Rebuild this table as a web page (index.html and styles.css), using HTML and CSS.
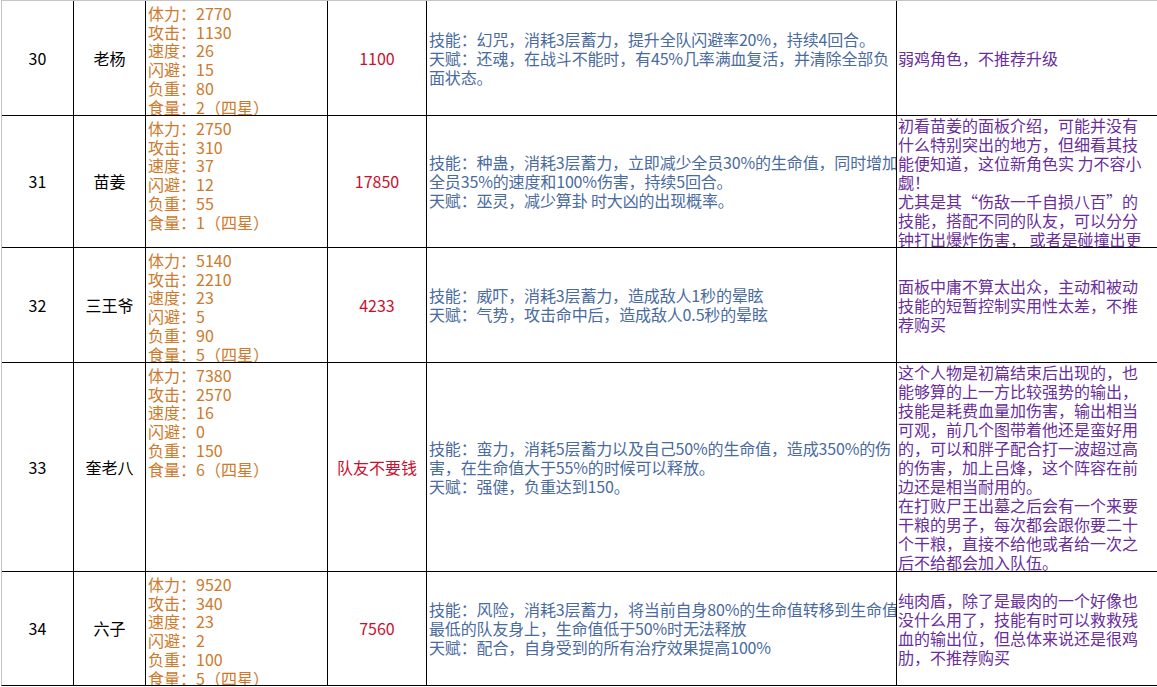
FILE: index.html
```html
<!DOCTYPE html>
<html lang="zh">
<head>
<meta charset="utf-8">
<title>角色表</title>
<link rel="stylesheet" href="styles.css">
</head>
<body>
<div class="sheet">
  <div class="row">
    <div class="cell num"><div class="txt">30</div></div>
    <div class="cell name"><div class="txt">老杨</div></div>
    <div class="cell stats"><div class="txt">体力：2770<br>攻击：1130<br>速度：26<br>闪避：15<br>负重：80<br>食量：2（四星）</div></div>
    <div class="cell price"><div class="txt">1100</div></div>
    <div class="cell skill"><div class="txt">技能：幻咒，消耗3层蓄力，提升全队闪避率20%，持续4回合。<br>天赋：还魂，在战斗不能时，有45%几率满血复活，并清除全部负<br>面状态。</div></div>
    <div class="cell note"><div class="txt">弱鸡角色，不推荐升级</div></div>
  </div>
  <div class="row">
    <div class="cell num"><div class="txt">31</div></div>
    <div class="cell name"><div class="txt">苗姜</div></div>
    <div class="cell stats"><div class="txt">体力：2750<br>攻击：310<br>速度：37<br>闪避：12<br>负重：55<br>食量：1（四星）</div></div>
    <div class="cell price"><div class="txt">17850</div></div>
    <div class="cell skill"><div class="txt">技能：种蛊，消耗3层蓄力，立即减少全员30%的生命值，同时增加<br>全员35%的速度和100%伤害，持续5回合。<br>天赋：巫灵，减少算卦 时大凶的出现概率。</div></div>
    <div class="cell note"><div class="txt">初看苗姜的面板介绍，可能并没有<br>什么特别突出的地方，但细看其技<br>能便知道，这位新角色实 力不容小<br>觑！<br>尤其是其“伤敌一千自损八百”的<br>技能，搭配不同的队友，可以分分<br>钟打出爆炸伤害， 或者是碰撞出更</div></div>
  </div>
  <div class="row">
    <div class="cell num"><div class="txt">32</div></div>
    <div class="cell name"><div class="txt">三王爷</div></div>
    <div class="cell stats"><div class="txt">体力：5140<br>攻击：2210<br>速度：23<br>闪避：5<br>负重：90<br>食量：5（四星）</div></div>
    <div class="cell price"><div class="txt">4233</div></div>
    <div class="cell skill"><div class="txt">技能：威吓，消耗3层蓄力，造成敌人1秒的晕眩<br>天赋：气势，攻击命中后，造成敌人0.5秒的晕眩</div></div>
    <div class="cell note"><div class="txt">面板中庸不算太出众，主动和被动<br>技能的短暂控制实用性太差，不推<br>荐购买</div></div>
  </div>
  <div class="row">
    <div class="cell num"><div class="txt">33</div></div>
    <div class="cell name"><div class="txt">奎老八</div></div>
    <div class="cell stats"><div class="txt">体力：7380<br>攻击：2570<br>速度：16<br>闪避：0<br>负重：150<br>食量：6（四星）</div></div>
    <div class="cell price"><div class="txt">队友不要钱</div></div>
    <div class="cell skill"><div class="txt">技能：蛮力，消耗5层蓄力以及自己50%的生命值，造成350%的伤<br>害，在生命值大于55%的时候可以释放。<br>天赋：强健，负重达到150。</div></div>
    <div class="cell note"><div class="txt">这个人物是初篇结束后出现的，也<br>能够算的上一方比较强势的输出，<br>技能是耗费血量加伤害，输出相当<br>可观，前几个图带着他还是蛮好用<br>的，可以和胖子配合打一波超过高<br>的伤害，加上吕烽，这个阵容在前<br>边还是相当耐用的。<br>在打败尸王出墓之后会有一个来要<br>干粮的男子，每次都会跟你要二十<br>个干粮，直接不给他或者给一次之<br>后不给都会加入队伍。</div></div>
  </div>
  <div class="row">
    <div class="cell num"><div class="txt">34</div></div>
    <div class="cell name"><div class="txt">六子</div></div>
    <div class="cell stats"><div class="txt">体力：9520<br>攻击：340<br>速度：23<br>闪避：2<br>负重：100<br>食量：5（四星）</div></div>
    <div class="cell price"><div class="txt">7560</div></div>
    <div class="cell skill"><div class="txt">技能：风险，消耗3层蓄力，将当前自身80%的生命值转移到生命值<br>最低的队友身上，生命值低于50%时无法释放<br>天赋：配合，自身受到的所有治疗效果提高100%</div></div>
    <div class="cell note"><div class="txt">纯肉盾，除了是最肉的一个好像也<br>没什么用了，技能有时可以救救残<br>血的输出位，但总体来说还是很鸡<br>肋，不推荐购买</div></div>
  </div>
</div>
</body>
</html>
```

FILE: styles.css
```css
html, body {
  margin: 0;
  padding: 0;
  background: #fff;
}

body {
  font-family: "Noto Sans CJK SC", "Noto Sans", sans-serif;
  font-size: 16px;
  color: #000;
  overflow: hidden;
}

.sheet {
  margin-left: 1px;
  border-left: 1px solid #c4c4c4;
  border-top: 1px solid #c4c4c4;
  border-bottom: 1px solid #000;
  display: grid;
  grid-template-columns: 71px 71px 181px 98px 469px 1fr;
  grid-template-rows: 114px 131px 114px 208px 113px;
  gap: 1px;
  background: #000;
}

.row {
  display: contents;
}

.cell {
  background: #fff;
  display: flex;
  flex-direction: column;
  overflow: hidden;
  min-width: 0;
  min-height: 0;
}

.txt {
  margin: auto 0;
  white-space: nowrap;
  line-height: 19px;
}

.num, .name {
  text-align: center;
}

.stats .txt {
  margin: 0;
  padding: 3px 0 0 2px;
  line-height: 18.7px;
  color: #cd7a2c;
}

.price {
  text-align: center;
  color: #c8102e;
}

.skill .txt {
  padding-left: 2px;
  letter-spacing: -0.15px;
  color: #4a6b9e;
}

.note .txt {
  padding-left: 1px;
  color: #6a2e9c;
}
```
